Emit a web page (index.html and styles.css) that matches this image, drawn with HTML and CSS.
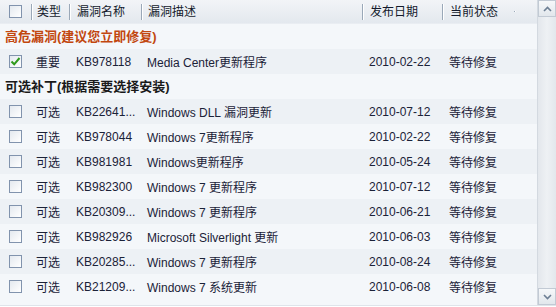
FILE: index.html
```html
<html lang="zh-CN">
<head>
    <meta charset="UTF-8">
    <link rel="stylesheet" href="styles.css">
    <title>漏洞修复</title>
</head>
<body>
    <div class="panel">
        <div class="list">
            <div class="row head">
                <div class="cell c-check"><span class="box"></span></div>
                <div class="cell c-type sep">类型</div>
                <div class="cell c-name sep">漏洞名称</div>
                <div class="cell c-desc sep">漏洞描述</div>
                <div class="cell c-date sep">发布日期</div>
                <div class="cell c-state sep">当前状态</div>
                <div class="cell c-rest sep"></div>
            </div>

            <div class="group danger">高危漏洞(建议您立即修复)</div>
            <div class="row item dark">
                <div class="cell c-check"><span class="box checked"><svg width="11" height="11" viewBox="0 0 11 11"><path d="M1.5 5.5 L4.2 8.3 L9.5 2" fill="none" stroke="#2f9a1c" stroke-width="2"/></svg></span></div>
                <div class="cell c-type">重要</div>
                <div class="cell c-name">KB978118</div>
                <div class="cell c-desc">Media Center更新程序</div>
                <div class="cell c-date">2010-02-22</div>
                <div class="cell c-state">等待修复</div>
            </div>

            <div class="group">可选补丁(根据需要选择安装)</div>
            <div class="row item dark">
                <div class="cell c-check"><span class="box"></span></div>
                <div class="cell c-type">可选</div>
                <div class="cell c-name">KB22641...</div>
                <div class="cell c-desc">Windows DLL 漏洞更新</div>
                <div class="cell c-date">2010-07-12</div>
                <div class="cell c-state">等待修复</div>
            </div>
            <div class="row item">
                <div class="cell c-check"><span class="box"></span></div>
                <div class="cell c-type">可选</div>
                <div class="cell c-name">KB978044</div>
                <div class="cell c-desc">Windows 7更新程序</div>
                <div class="cell c-date">2010-02-22</div>
                <div class="cell c-state">等待修复</div>
            </div>
            <div class="row item dark">
                <div class="cell c-check"><span class="box"></span></div>
                <div class="cell c-type">可选</div>
                <div class="cell c-name">KB981981</div>
                <div class="cell c-desc">Windows更新程序</div>
                <div class="cell c-date">2010-05-24</div>
                <div class="cell c-state">等待修复</div>
            </div>
            <div class="row item">
                <div class="cell c-check"><span class="box"></span></div>
                <div class="cell c-type">可选</div>
                <div class="cell c-name">KB982300</div>
                <div class="cell c-desc">Windows 7 更新程序</div>
                <div class="cell c-date">2010-07-12</div>
                <div class="cell c-state">等待修复</div>
            </div>
            <div class="row item dark">
                <div class="cell c-check"><span class="box"></span></div>
                <div class="cell c-type">可选</div>
                <div class="cell c-name">KB20309...</div>
                <div class="cell c-desc">Windows 7 更新程序</div>
                <div class="cell c-date">2010-06-21</div>
                <div class="cell c-state">等待修复</div>
            </div>
            <div class="row item">
                <div class="cell c-check"><span class="box"></span></div>
                <div class="cell c-type">可选</div>
                <div class="cell c-name">KB982926</div>
                <div class="cell c-desc">Microsoft Silverlight 更新</div>
                <div class="cell c-date">2010-06-03</div>
                <div class="cell c-state">等待修复</div>
            </div>
            <div class="row item dark">
                <div class="cell c-check"><span class="box"></span></div>
                <div class="cell c-type">可选</div>
                <div class="cell c-name">KB20285...</div>
                <div class="cell c-desc">Windows 7 更新程序</div>
                <div class="cell c-date">2010-08-24</div>
                <div class="cell c-state">等待修复</div>
            </div>
            <div class="row item">
                <div class="cell c-check"><span class="box"></span></div>
                <div class="cell c-type">可选</div>
                <div class="cell c-name">KB21209...</div>
                <div class="cell c-desc">Windows 7 系统更新</div>
                <div class="cell c-date">2010-06-08</div>
                <div class="cell c-state">等待修复</div>
            </div>
        </div>

        <div class="scrollbar">
            <div class="arrow"><svg width="9" height="6" viewBox="0 0 9 6"><path d="M1 5 L4.5 1.5 L8 5" fill="none" stroke="#6d7f94" stroke-width="1.6"/></svg></div>
            <div class="track"></div>
            <div class="arrow"><svg width="9" height="6" viewBox="0 0 9 6"><path d="M1 1 L4.5 4.5 L8 1" fill="none" stroke="#6d7f94" stroke-width="1.6"/></svg></div>
        </div>
    </div>
</body>
</html>
```

FILE: styles.css
```css
body {
    margin: 0;
    background-color: #ffffff;
    font-family: "Liberation Sans", "Noto Sans CJK SC", sans-serif;
    font-size: 12px;
    color: #1b2238;
}

.panel {
    display: flex;
    width: 556px;
    height: 305px;
    background-color: #f4f7fa;
    border-bottom: 1px solid #dfe4ea;
}

.list {
    flex: 1;
    overflow: hidden;
}

.row {
    display: flex;
    align-items: center;
}

.cell {
    flex-shrink: 0;
    box-sizing: border-box;
    padding-left: 6px;
    white-space: nowrap;
    overflow: hidden;
}

.c-check { width: 31px; padding-left: 9px; }
.c-type { width: 38px; padding-left: 5px; }
.c-name { width: 72px; padding-left: 7px; }
.c-desc { width: 221px; }
.c-date { width: 80px; padding-left: 7px; }
.c-state { width: 72px; padding-left: 7px; }
.c-rest { width: 24px; }

.head {
    height: 23px;
    background: linear-gradient(#f2f4f7, #e3e8ee);
    border-bottom: 1px solid #e9edf2;
    color: #141a2c;
}

.head .cell {
    line-height: 23px;
}

.head .sep {
    border-left: 1px solid #9aa8b8;
    box-shadow: inset 1px 0 0 #ffffff;
    line-height: 15px;
    padding-top: 1px;
}

.box {
    display: block;
    width: 11px;
    height: 11px;
    border: 1px solid #8193ad;
    background: linear-gradient(135deg, #e4e9ef, #ffffff);
}

.box svg {
    display: block;
}

.group {
    height: 25px;
    line-height: 26px;
    padding-left: 5px;
    font-size: 13px;
    font-weight: bold;
    color: #1a1a1a;
}

.group.danger {
    color: #c2470f;
}

.item {
    height: 25px;
}

.item.dark {
    background-color: #edf1f5;
}

.scrollbar {
    width: 18px;
    display: flex;
    flex-direction: column;
    background-color: #e8ecf0;
    border-left: 1px solid #d3d9e0;
}

.arrow {
    height: 17px;
    display: flex;
    align-items: center;
    justify-content: center;
    box-sizing: border-box;
    border: 1px solid #c2cad4;
    background: linear-gradient(#f6f8fa, #e2e7ec);
}

.track {
    flex: 1;
    background: linear-gradient(90deg, #e3e7ec, #eef1f4 50%, #e3e7ec);
}
```
